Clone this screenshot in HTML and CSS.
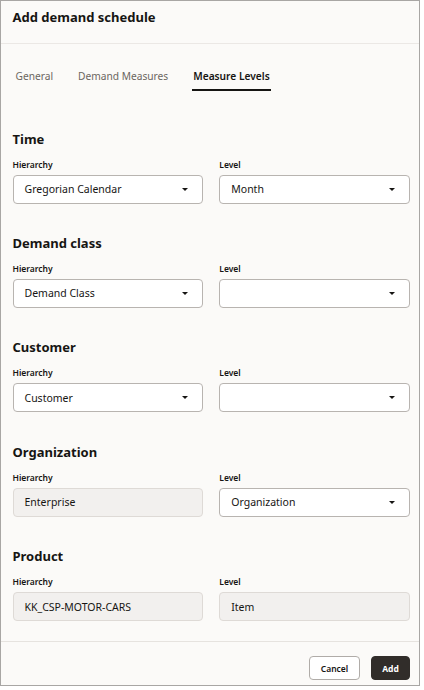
FILE: index.html
```html
<!DOCTYPE html>
<html lang="en">
<head>
<meta charset="utf-8">
<title>Add demand schedule</title>
<link rel="stylesheet" href="styles.css">
</head>
<body>
<div class="dialog">
  <div class="header">
    <h1 class="title">Add demand schedule</h1>
  </div>
  <div class="tabs">
    <div class="tab">General</div>
    <div class="tab">Demand Measures</div>
    <div class="tab active">Measure Levels</div>
  </div>
  <div class="content">
    <section class="section">
      <h2 class="heading">Time</h2>
      <div class="row">
        <div class="field">
          <div class="label">Hierarchy</div>
          <div class="box select"><span class="value">Gregorian Calendar</span><span class="arrow"></span></div>
        </div>
        <div class="field">
          <div class="label">Level</div>
          <div class="box select"><span class="value">Month</span><span class="arrow"></span></div>
        </div>
      </div>
    </section>
    <section class="section">
      <h2 class="heading">Demand class</h2>
      <div class="row">
        <div class="field">
          <div class="label">Hierarchy</div>
          <div class="box select"><span class="value">Demand Class</span><span class="arrow"></span></div>
        </div>
        <div class="field">
          <div class="label">Level</div>
          <div class="box select"><span class="value"></span><span class="arrow"></span></div>
        </div>
      </div>
    </section>
    <section class="section">
      <h2 class="heading">Customer</h2>
      <div class="row">
        <div class="field">
          <div class="label">Hierarchy</div>
          <div class="box select"><span class="value">Customer</span><span class="arrow"></span></div>
        </div>
        <div class="field">
          <div class="label">Level</div>
          <div class="box select"><span class="value"></span><span class="arrow"></span></div>
        </div>
      </div>
    </section>
    <section class="section">
      <h2 class="heading">Organization</h2>
      <div class="row">
        <div class="field">
          <div class="label">Hierarchy</div>
          <div class="box readonly"><span class="value">Enterprise</span></div>
        </div>
        <div class="field">
          <div class="label">Level</div>
          <div class="box select"><span class="value">Organization</span><span class="arrow"></span></div>
        </div>
      </div>
    </section>
    <section class="section">
      <h2 class="heading">Product</h2>
      <div class="row">
        <div class="field">
          <div class="label">Hierarchy</div>
          <div class="box readonly"><span class="value">KK_CSP-MOTOR-CARS</span></div>
        </div>
        <div class="field">
          <div class="label">Level</div>
          <div class="box readonly"><span class="value">Item</span></div>
        </div>
      </div>
    </section>
  </div>
  <div class="footer">
    <button class="btn btn-outline">Cancel</button>
    <button class="btn btn-primary">Add</button>
  </div>
</div>
</body>
</html>
```
FILE: styles.css
```css
* { box-sizing: border-box; }
html, body { margin: 0; padding: 0; background: #ffffff; }
body {
  font-family: "Noto Sans", "Open Sans", sans-serif;
  color: #161513;
}
.dialog {
  width: 420px;
  height: 686px;
  border: 1px solid #a8a6a4;
  background: #fbfaf8;
  display: flex;
  flex-direction: column;
  overflow: hidden;
}
.header {
  height: 43px;
  padding: 8.2px 12px 0 11.5px;
  border-bottom: 1px solid #ebe8e5;
}
.title {
  margin: 0;
  font-size: 13px;
  line-height: 16px;
  font-weight: 700;
}
.tabs {
  display: flex;
  gap: 23px;
  padding: 25px 0 0 13.5px;
}
.tab {
  font-size: 10.2px;
  line-height: 14px;
  padding: 0 1px 6px;
  border-bottom: 2px solid transparent;
  color: #6b6661;
}
.tab.active {
  color: #161513;
  font-weight: 600;
  border-bottom-color: #161513;
}
.content {
  flex: 1;
  overflow: hidden;
  padding: 39.5px 9px 0 11.5px;
}
.section { margin-bottom: 31.4px; }
.heading {
  margin: 0 0 12px;
  font-size: 13px;
  line-height: 16px;
  font-weight: 700;
}
.row {
  display: grid;
  grid-template-columns: 1fr 1fr;
  column-gap: 16px;
}
.label {
  font-size: 8.5px;
  line-height: 11px;
  font-weight: 600;
  margin-bottom: 5px;
}
.box {
  height: 29px;
  border-radius: 4px;
  display: flex;
  align-items: center;
  justify-content: space-between;
  padding: 0 14px 0 11px;
  font-size: 10.5px;
}
.select {
  background: #ffffff;
  border: 1px solid #b8b4b0;
}
.readonly {
  background: #f2f0ee;
  border: 1px solid #dedad6;
}
.arrow {
  width: 0;
  height: 0;
  border-left: 3px solid transparent;
  border-right: 3px solid transparent;
  border-top: 3px solid #161513;
}
.footer {
  height: 44px;
  border-top: 1px solid #e6e3df;
  display: flex;
  justify-content: flex-end;
  align-items: flex-start;
  gap: 11px;
  padding: 14px 9px 0 0;
}
.btn {
  height: 24px;
  border-radius: 4px;
  font-family: "Noto Sans", "Open Sans", sans-serif;
  font-size: 8.5px;
  font-weight: 600;
  padding: 0;
  cursor: pointer;
}
.btn-outline {
  width: 51px;
  background: #ffffff;
  border: 1px solid #b0aca8;
  color: #161513;
}
.btn-primary {
  width: 39px;
  background: #312d2a;
  border: 1px solid #312d2a;
  color: #ffffff;
  font-weight: 700;
}
```
